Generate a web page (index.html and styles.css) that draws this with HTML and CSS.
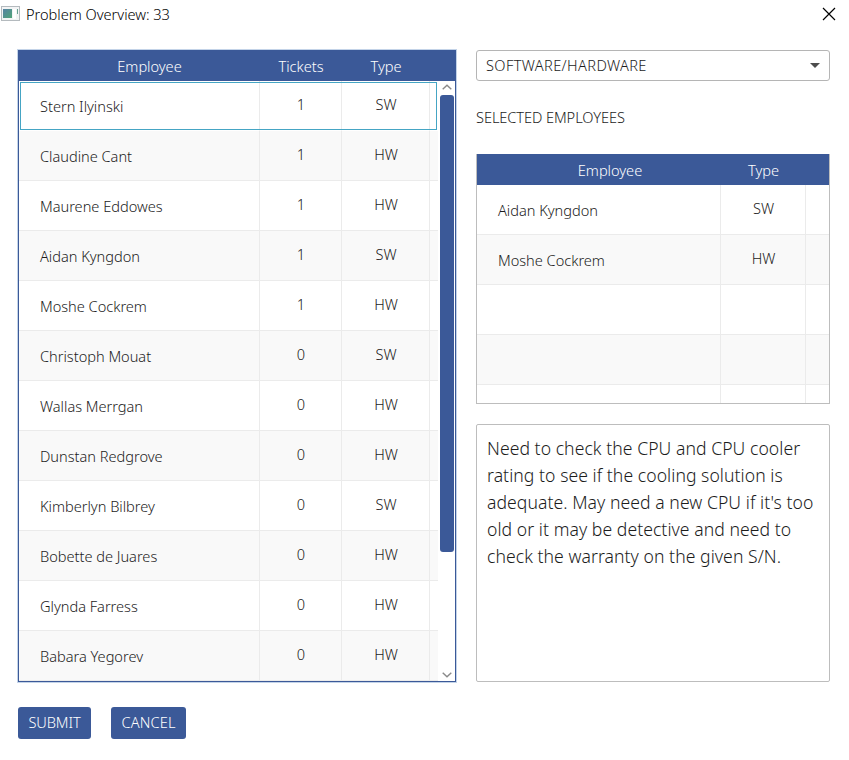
FILE: index.html
```
<!DOCTYPE html>
<html lang="en">
<head>
<meta charset="utf-8">
<title>Problem Overview: 33</title>
<link rel="stylesheet" href="styles.css">
</head>
<body>
<header class="titlebar">
  <svg class="app-icon" width="19" height="15" viewBox="0 0 19 15"><defs><linearGradient id="pane" x1="0" y1="0" x2="1" y2="1"><stop offset="0" stop-color="#5682a4"/><stop offset="1" stop-color="#51a478"/></linearGradient></defs><rect x=".5" y=".5" width="18" height="14" fill="#f3f4f5" stroke="#b4babe"/><rect x="2" y="3" width="9" height="9" fill="url(#pane)"/><rect x="12" y="3" width="3" height="10" fill="#fff"/><path d="M16.5 3v5" stroke="#68a292"/></svg>
  <h1>Problem Overview: 33</h1>
  <svg class="close" width="14" height="14" viewBox="0 0 14 14"><path d="M1 1l12 12M13 1L1 13" stroke="#000" stroke-width="1.2"/></svg>
</header>
<main>
  <section class="left">
    <div class="table staff">
      <div class="row head"><span>Employee</span><span>Tickets</span><span>Type</span><span></span></div>
      <div class="body">
        <div class="rows">
          <div class="row focused"><b>Stern Ilyinski</b><span>1</span><span>SW</span><i></i></div>
          <div class="row"><b>Claudine Cant</b><span>1</span><span>HW</span><i></i></div>
          <div class="row"><b>Maurene Eddowes</b><span>1</span><span>HW</span><i></i></div>
          <div class="row"><b>Aidan Kyngdon</b><span>1</span><span>SW</span><i></i></div>
          <div class="row"><b>Moshe Cockrem</b><span>1</span><span>HW</span><i></i></div>
          <div class="row"><b>Christoph Mouat</b><span>0</span><span>SW</span><i></i></div>
          <div class="row"><b>Wallas Merrgan</b><span>0</span><span>HW</span><i></i></div>
          <div class="row"><b>Dunstan Redgrove</b><span>0</span><span>HW</span><i></i></div>
          <div class="row"><b>Kimberlyn Bilbrey</b><span>0</span><span>SW</span><i></i></div>
          <div class="row"><b>Bobette de Juares</b><span>0</span><span>HW</span><i></i></div>
          <div class="row"><b>Glynda Farress</b><span>0</span><span>HW</span><i></i></div>
          <div class="row"><b>Babara Yegorev</b><span>0</span><span>HW</span><i></i></div>
        </div>
        <div class="scrollbar">
          <svg width="10" height="6" viewBox="0 0 10 6"><path d="M.7 5.2L5 1.2l4.300 4" fill="none" stroke="#8a8a8a" stroke-width="1.400"/></svg>
          <div class="track"><div class="thumb"></div></div>
          <svg width="10" height="6" viewBox="0 0 10 6"><path d="M.7 .8L5 4.800l4.300-4" fill="none" stroke="#8a8a8a" stroke-width="1.400"/></svg>
        </div>
      </div>
    </div>
    <div class="actions"><button class="submit">SUBMIT</button><button class="cancel">CANCEL</button></div>
  </section>
  <section class="right">
    <div class="select"><span>SOFTWARE/HARDWARE</span><svg width="10" height="5" viewBox="0 0 10 5"><path d="M0 0h10L5 5z" fill="#4d4d4d"/></svg></div>
    <h2>SELECTED EMPLOYEES</h2>
    <div class="table selected">
      <div class="row head"><span>Employee</span><span>Type</span><span></span></div>
      <div class="row"><b>Aidan Kyngdon</b><span>SW</span><i></i></div>
      <div class="row"><b>Moshe Cockrem</b><span>HW</span><i></i></div>
      <div class="row"><b></b><span></span><i></i></div>
      <div class="row"><b></b><span></span><i></i></div>
      <div class="row"><b></b><span></span><i></i></div>
    </div>
    <div class="note">Need to check the CPU and CPU cooler<br>rating to see if the cooling solution is<br>adequate. May need a new CPU if it's too<br>old or it may be detective and need to<br>check the warranty on the given S/N.</div>
  </section>
</main>
</body>
</html>
```
FILE: styles.css
```
* { box-sizing: border-box; }
body { margin: 0; width: 849px; height: 760px; overflow: hidden; background: #fff; color: #1c1c1c; font: 300 14.6px/20px "Noto Sans", "Open Sans", sans-serif; letter-spacing: -0.02px; }
h1, h2, b { margin: 0; font-size: inherit; font-weight: inherit; }
.titlebar { display: flex; height: 50px; padding: 4px 13px 0 1px; align-items: flex-start; color: #000; }
.app-icon { margin-top: 2px; }
.titlebar h1 { margin-left: 6px; flex: 1; }
.close { margin-top: 3px; }
main { display: flex; gap: 20px; padding-left: 18px; }
.left { width: 438px; }
.right { width: 354px; }
.table { overflow: hidden; }
.row { display: grid; height: 50px; }
.row > * { display: flex; align-items: center; justify-content: center; border-right: 1px solid #ebebeb; border-bottom: 1px solid #ebebeb; }
.row > :last-child { border-right: 0; }
.row > b { justify-content: flex-start; padding: 1px 0 0 21px; }
.row > span { padding: 0 0 3px 1px; }
.row:nth-child(even) { background: #f9f9f9; }
.row.head { height: 31px; background: #3b5998; color: #fff; }
.row.head > * { border: 0; padding: 0; }
.staff { height: 632px; border: 1px solid #3b5998; box-shadow: 0 0 0 1px #c3d3e8; }
.staff .row { grid-template-columns: 241px 82px 88px 8px; }
.staff .head { height: 30px; }
.body { display: flex; height: 600px; }
.rows { width: 419px; }
.row.focused { outline: 1px solid #45a5c4; outline-offset: -2px; }
.row.focused > * { border-bottom-color: transparent; }
.scrollbar { width: 18px; display: flex; flex-direction: column; align-items: center; padding: 3px 1px 3px 2px; }
.track { flex: 1; margin: 5px 0 4px; width: 14px; }
.thumb { height: 457px; background: #3b5998; border-radius: 3px; }
.actions { display: flex; gap: 20px; padding-top: 25px; }
button { height: 32px; padding: 0 0 2px; border: 0; border-radius: 3px; background: #3b5998; color: #fff; font: inherit; letter-spacing: -0.1px; }
.submit { width: 73px; }
.cancel { width: 75px; letter-spacing: 0.15px; }
.select { display: flex; align-items: center; justify-content: space-between; height: 31px; padding: 0 9px; border: 1px solid #b5b5b5; border-radius: 3px; letter-spacing: 0.38px; }
.select span { padding-bottom: 2px; }
h2 { margin: 26px 0 27px; letter-spacing: -0.08px; }
.selected { height: 250px; border: 1px solid #bdbdbd; border-top: 0; }
.selected .row { grid-template-columns: 244px 85px 1fr; }
.selected .row:nth-child(even) { background: #fff; }
.selected .row:nth-child(odd) { background: #f9f9f9; }
.selected .row.head { background: #3b5998; margin: 0 -1px; padding: 0 1px; }
.selected .row.head > :first-child { padding-left: 22px; }
.staff .head > :first-child { padding-left: 20px; }
.note { margin-top: 20px; height: 258px; padding: 10px; border: 1px solid #bdbdbd; border-radius: 2px; font-size: 17.6px; line-height: 27px; white-space: nowrap; letter-spacing: 0.05px; }
```
